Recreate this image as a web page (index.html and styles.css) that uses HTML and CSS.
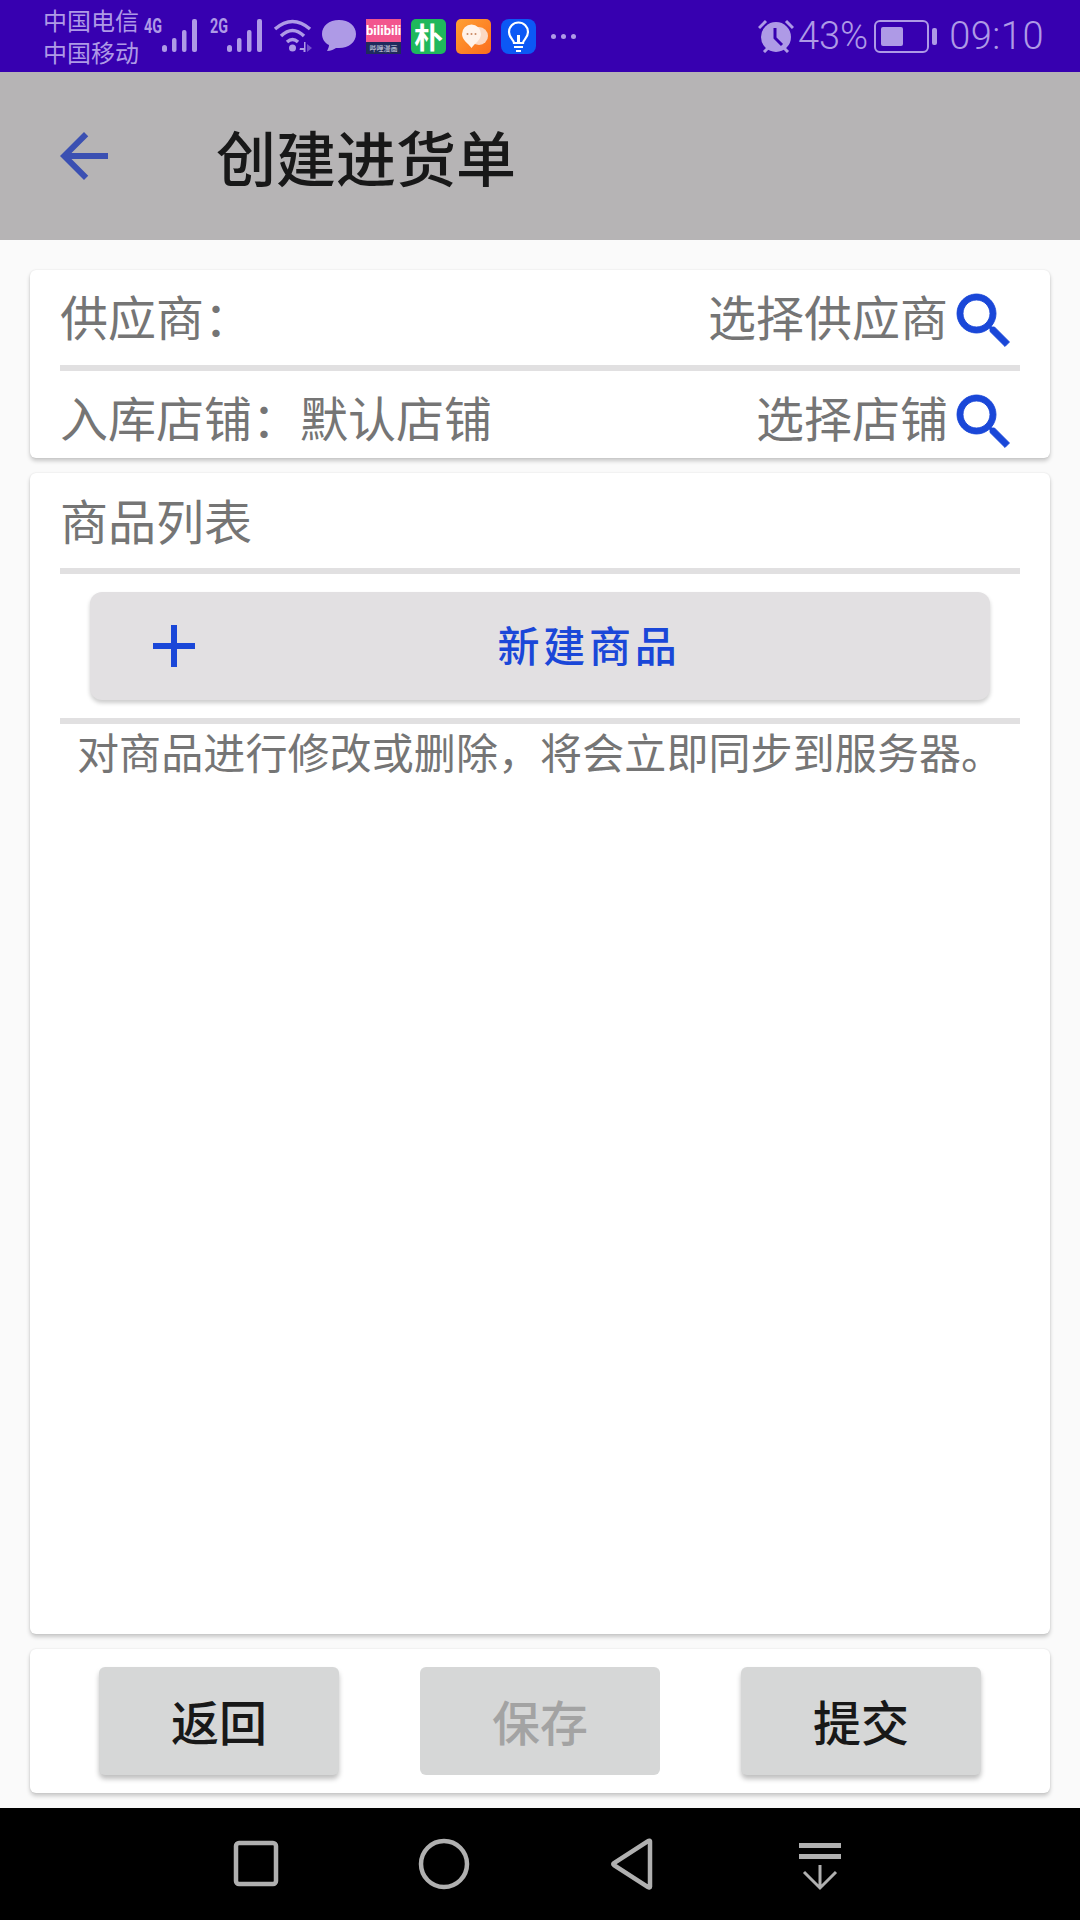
FILE: index.html
```html
<!DOCTYPE html>
<html lang="zh-CN">
<head>
    <meta charset="UTF-8">
    <meta name="viewport" content="width=device-width, initial-scale=1.0">
    <title>创建进货单</title>
    <link rel="stylesheet" href="styles.css">
</head>
<body>
    <div class="page">
        <div class="status-bar">
            <div class="status-left">
                <div class="carriers">
                    <span>中国电信</span>
                    <span>中国移动</span>
                </div>
                <svg class="signal signal-first" viewBox="0 -6 54 42">
                    <text class="net-type" x="0" y="14" textLength="18" lengthAdjust="spacingAndGlyphs">4G</text>
                    <rect x="18" y="26" width="5" height="7" rx="2.5"/>
                    <rect x="28" y="19" width="4.5" height="14" rx="2"/>
                    <rect x="38" y="11" width="4.5" height="22" rx="2"/>
                    <rect x="48" y="0" width="5" height="33" rx="2"/>
                </svg>
                <svg class="signal signal-second" viewBox="0 -6 54 42">
                    <text class="net-type" x="0" y="14" textLength="18" lengthAdjust="spacingAndGlyphs">2G</text>
                    <rect x="17" y="26" width="5" height="7" rx="2.5"/>
                    <rect x="27" y="19" width="4.5" height="14" rx="2"/>
                    <rect x="37" y="11" width="4.5" height="22" rx="2"/>
                    <rect x="47" y="0" width="5" height="33" rx="2"/>
                </svg>
                <svg class="wifi" viewBox="0 0 39 34">
                    <path d="M2 10 Q19.500 -5 37 10" fill="none" stroke="#ae9ae6" stroke-width="3.500"/>
                    <path d="M8 17 Q19.500 6 31 17" fill="none" stroke="#ae9ae6" stroke-width="3.500"/>
                    <path d="M14 23 Q19.500 18 25 23" fill="none" stroke="#ae9ae6" stroke-width="3.500"/>
                    <circle cx="19.500" cy="29" r="3.500"/>
                    <path d="M27 29h4v-6h1.500v10h-2v-2h-4z"/>
                    <path d="M34 25l5 4-5 4z" opacity="0.5"/>
                </svg>
                <svg class="bubble" viewBox="0 0 34 32">
                    <path d="M17 0C7 0 0 6 0 14c0 5 3 9 7 11 0 2-1 4-2 6 4 0 7-2 9-3h3c10 0 17-6 17-14S27 0 17 0z"/>
                </svg>
                <div class="app-icon app-bili">
                    <span class="bili-name">bilibili</span>
                    <span class="bili-sub">哔哩漫画</span>
                </div>
                <div class="app-icon app-green">朴</div>
                <div class="app-icon app-orange">
                    <svg viewBox="0 0 35 35">
                        <circle cx="23" cy="17" r="9" fill="#fbd9c4"/>
                        <path d="M6 15a9.500 9.500 0 0 1 19 0c0 6-6 9-9.500 14C12 24 6 21 6 15z" fill="#fff3ea"/>
                        <circle cx="11.500" cy="15" r="1" fill="#c98a63"/>
                        <circle cx="15.500" cy="15" r="1" fill="#c98a63"/>
                        <circle cx="19.500" cy="15" r="1" fill="#c98a63"/>
                    </svg>
                </div>
                <div class="app-icon app-blue">
                    <svg viewBox="0 0 35 35">
                        <path d="M13 24c0-3-5-5-5-11a9.500 9.500 0 0 1 19 0c0 6-5 8-5 11z" fill="none" stroke="#fff" stroke-width="2.200"/>
                        <path d="M13 28h9M15 32h5" stroke="#fff" stroke-width="2.200"/>
                        <path d="M17.500 24v-8" stroke="#fff" stroke-width="3"/>
                    </svg>
                </div>
                <div class="status-dots">
                    <span></span><span></span><span></span>
                </div>
            </div>
            <div class="status-right">
                <svg class="alarm" viewBox="0 0 36 34">
                    <path d="M1 9l7-7M35 9l-7-7M6 33l4-4M30 33l-4-4" stroke="#ae9ae6" stroke-width="3" fill="none"/>
                    <circle cx="18" cy="18" r="15"/>
                    <path d="M17 9v10l7 7" stroke="#3700b0" stroke-width="3" fill="none"/>
                </svg>
                <span class="battery-text">43%</span>
                <div class="battery">
                    <div class="battery-body"><div class="battery-fill"></div></div>
                    <div class="battery-nib"></div>
                </div>
                <span class="clock">09:10</span>
            </div>
        </div>

        <header class="toolbar">
            <svg class="back-icon" viewBox="0 0 24 24">
                <path d="M20 11H7.830l5.590-5.590L12 4l-8 8 8 8 1.410-1.410L7.830 13H20v-2z"/>
            </svg>
            <h1>创建进货单</h1>
        </header>

        <main>
            <section class="card card-info">
                <div class="info-row">
                    <span class="label">供应商：</span>
                    <span class="pick">选择供应商</span>
                    <svg class="search-icon" viewBox="0 0 24 24">
                        <path d="M15.500 14h-.790l-.280-.270C15.410 12.590 16 11.110 16 9.500 16 5.910 13.090 3 9.500 3S3 5.910 3 9.500 5.910 16 9.500 16c1.610 0 3.090-.590 4.230-1.570l.270.280v.790l5 4.990L20.490 19l-4.990-5zm-6 0C7.010 14 5 11.990 5 9.500S7.010 5 9.500 5 14 7.010 14 9.500 11.990 14 9.500 14z"/>
                    </svg>
                </div>
                <div class="divider"></div>
                <div class="info-row">
                    <span class="label">入库店铺：默认店铺</span>
                    <span class="pick">选择店铺</span>
                    <svg class="search-icon" viewBox="0 0 24 24">
                        <path d="M15.500 14h-.790l-.280-.270C15.410 12.590 16 11.110 16 9.500 16 5.910 13.090 3 9.500 3S3 5.910 3 9.500 5.910 16 9.500 16c1.610 0 3.090-.590 4.230-1.570l.270.280v.790l5 4.990L20.490 19l-4.990-5zm-6 0C7.010 14 5 11.990 5 9.500S7.010 5 9.500 5 14 7.010 14 9.500 11.990 14 9.500 14z"/>
                    </svg>
                </div>
            </section>

            <section class="card card-goods">
                <div class="goods-title">商品列表</div>
                <div class="divider"></div>
                <button class="add-button" type="button">
                    <svg class="add-icon" viewBox="0 0 24 24">
                        <path d="M19 13h-6v6h-2v-6H5v-2h6V5h2v6h6v2z"/>
                    </svg>
                    <span>新建商品</span>
                </button>
                <div class="divider"></div>
                <p class="goods-note">对商品进行修改或删除，将会立即同步到服务器。</p>
            </section>

            <section class="card card-actions">
                <button class="action" type="button">返回</button>
                <button class="action action-disabled" type="button" disabled>保存</button>
                <button class="action" type="button">提交</button>
            </section>
        </main>

        <nav class="nav-bar">
            <div class="nav-item">
                <svg viewBox="0 0 60 60"><rect x="10" y="9" width="40" height="41" rx="3"/></svg>
            </div>
            <div class="nav-item">
                <svg viewBox="0 0 60 60"><circle cx="30" cy="30" r="23"/></svg>
            </div>
            <div class="nav-item">
                <svg viewBox="0 0 60 60"><path d="M48 7.500c0-1-1-1-2-.300L12 29c-1 .700-1 1.300 0 2.200l34 21.800c1 .700 2 .500 2-.300z"/></svg>
            </div>
            <div class="nav-item">
                <svg viewBox="0 0 60 60">
                    <path class="nav-solid" d="M9 9h42v5H9zM9 20h42v5H9z"/>
                    <path d="M30 31v22M14 38l16 16 16-16" stroke-width="3"/>
                </svg>
            </div>
        </nav>
    </div>
</body>
</html>
```

FILE: styles.css
```css
:root {
    --status-bg: #3700b0;
    --status-color: #ae9ae6;
    --blue: #1a47d8;
    --text-gray: #757575;
    --text-dark: #181818;
    --divider: #e1e0e1;
}

* {
    box-sizing: border-box;
}

body {
    margin: 0;
    padding: 0;
    background-color: #fafafa;
    font-family: "Noto Sans CJK SC", "Noto Sans", sans-serif;
}

.page {
    width: 1080px;
    height: 1920px;
    display: flex;
    flex-direction: column;
    overflow: hidden;
}

/* status bar */
.status-bar {
    height: 72px;
    flex: none;
    display: flex;
    justify-content: space-between;
    align-items: center;
    padding: 0 36px 0 43px;
    background-color: var(--status-bg);
    color: var(--status-color);
}

.status-left,
.status-right {
    display: flex;
    align-items: center;
}

.carriers {
    width: 95px;
    display: flex;
    flex-direction: column;
    font-size: 24px;
    line-height: 32px;
    white-space: nowrap;
}

.signal {
    width: 54px;
    height: 42px;
    fill: var(--status-color);
    margin-top: -5px;
}

.signal-first {
    margin-left: 6px;
}

.signal-second {
    margin-left: 12px;
}

.net-type {
    font-family: "Roboto", sans-serif;
    font-size: 20px;
    font-weight: 700;
}

.wifi {
    width: 39px;
    height: 34px;
    margin-left: 9px;
    fill: var(--status-color);
}

.bubble {
    width: 34px;
    height: 32px;
    margin-left: 10px;
    fill: var(--status-color);
}

.app-icon {
    width: 35px;
    height: 35px;
    margin-left: 10px;
    border-radius: 5px;
    overflow: hidden;
}

.app-icon svg {
    display: block;
    width: 35px;
    height: 35px;
}

.app-bili {
    margin-left: 10px;
    display: flex;
    flex-direction: column;
    border-radius: 0;
    background-color: #1f2a5c;
    text-align: center;
}

.bili-name {
    height: 23px;
    background-color: #f2568e;
    color: #fff;
    font-family: "Roboto", sans-serif;
    font-size: 13px;
    font-weight: 700;
    line-height: 23px;
}

.bili-sub {
    height: 12px;
    color: #d8d8e8;
    font-size: 7px;
    line-height: 12px;
    white-space: nowrap;
}

.app-green {
    overflow: visible;
    background-color: #1fb85c;
    color: #fff;
    font-size: 29px;
    font-weight: 700;
    line-height: 35px;
    text-align: center;
}

.app-orange {
    background: linear-gradient(135deg, #ffa033, #fb6d1d);
}

.app-blue {
    background-color: #0c58f5;
    border-radius: 8px;
}

.status-dots {
    width: 25px;
    margin-left: 15px;
    display: flex;
    justify-content: space-between;
}

.status-dots span {
    width: 5px;
    height: 5px;
    border-radius: 50%;
    background-color: var(--status-color);
}

.alarm {
    width: 36px;
    height: 34px;
    fill: var(--status-color);
}

.battery-text,
.clock {
    font-family: "Roboto", sans-serif;
    font-size: 38px;
    font-weight: 300;
    line-height: 72px;
}

.battery-text {
    margin-left: 4px;
}

.battery {
    display: flex;
    align-items: center;
    margin-left: 6px;
}

.battery-body {
    width: 55px;
    height: 33px;
    padding: 5px;
    border: 2.500px solid var(--status-color);
    border-radius: 6px;
}

.battery-fill {
    width: 22px;
    height: 100%;
    border-radius: 2px;
    background-color: var(--status-color);
}

.battery-nib {
    width: 5px;
    height: 17px;
    margin-left: 3px;
    border-radius: 2px;
    background-color: var(--status-color);
}

.clock {
    margin-left: 12px;
    letter-spacing: 0.500px;
}

/* toolbar */
.toolbar {
    height: 168px;
    flex: none;
    display: flex;
    align-items: center;
    padding-left: 48px;
    background-color: #b6b4b5;
}

.back-icon {
    width: 72px;
    height: 72px;
    fill: #3b50b2;
}

.toolbar h1 {
    margin: 0 0 0 96px;
    color: var(--text-dark);
    font-size: 60px;
    font-weight: 500;
    line-height: 72px;
}

/* content */
main {
    flex: 1;
    display: flex;
    flex-direction: column;
    gap: 15px;
    padding: 30px 30px 15px;
}

.card {
    border-radius: 6px;
    background-color: #fff;
    box-shadow: 0 3px 4px rgba(0,0,0,0.2), 0 0 2px rgba(0,0,0,0.1);
}

.card-info {
    flex: none;
    height: 188px;
    padding: 15px 30px 0;
}

.info-row {
    display: flex;
    align-items: center;
    height: 72px;
    color: var(--text-gray);
    font-size: 48px;
}

.label,
.pick {
    padding-bottom: 12px;
}

.label {
    flex: 1;
}

.search-icon {
    width: 72px;
    height: 72px;
    fill: var(--blue);
    stroke: var(--blue);
    stroke-width: 0.3;
}

.divider {
    height: 6px;
    background-color: var(--divider);
}

.info-row + .divider {
    margin-top: 8px;
    margin-bottom: 15px;
}

.card-goods {
    flex: 1;
    padding: 0 30px;
}

.goods-title {
    height: 95px;
    color: var(--text-gray);
    font-size: 48px;
    line-height: 92px;
}

.add-button {
    width: 900px;
    height: 108px;
    display: flex;
    align-items: center;
    margin: 18px 0 18px 30px;
    padding: 0 26px 0 48px;
    border: none;
    border-radius: 12px;
    background-color: #e2e0e2;
    box-shadow: 0 3px 4px rgba(0,0,0,0.2);
    color: var(--blue);
    font-family: inherit;
    font-size: 42px;
    font-weight: 500;
    letter-spacing: 3.750px;
}

.add-icon {
    width: 72px;
    height: 72px;
    flex: none;
    fill: var(--blue);
}

.add-button span {
    flex: 1;
    padding: 0 0 5px 4px;
    text-align: center;
}

.goods-note {
    margin: 0;
    padding-left: 17px;
    color: var(--text-gray);
    font-size: 42px;
    letter-spacing: 0.1px;
    line-height: 54px;
    white-space: nowrap;
}

.card-actions {
    flex: none;
    height: 144px;
    display: flex;
    justify-content: space-between;
    align-items: center;
    padding: 0 69px;
}

.action {
    width: 240px;
    height: 108px;
    padding: 0 0 2px;
    border: none;
    border-radius: 6px;
    background-color: #d6d7d7;
    box-shadow: 0 4px 5px rgba(0,0,0,0.25);
    color: var(--text-dark);
    font-family: inherit;
    font-size: 48px;
    font-weight: 500;
}

.action-disabled {
    box-shadow: none;
    color: #a3a3a3;
}

/* navigation bar */
.nav-bar {
    height: 112px;
    flex: none;
    display: flex;
    justify-content: center;
    align-items: center;
    padding-right: 4px;
    background-color: #000;
}

.nav-item {
    width: 188px;
    display: flex;
    justify-content: center;
}

.nav-item svg {
    width: 60px;
    height: 60px;
    fill: none;
    stroke: #b0b0b0;
    stroke-width: 4.500;
}

.nav-item .nav-solid {
    fill: #b0b0b0;
    stroke: none;
}
```
